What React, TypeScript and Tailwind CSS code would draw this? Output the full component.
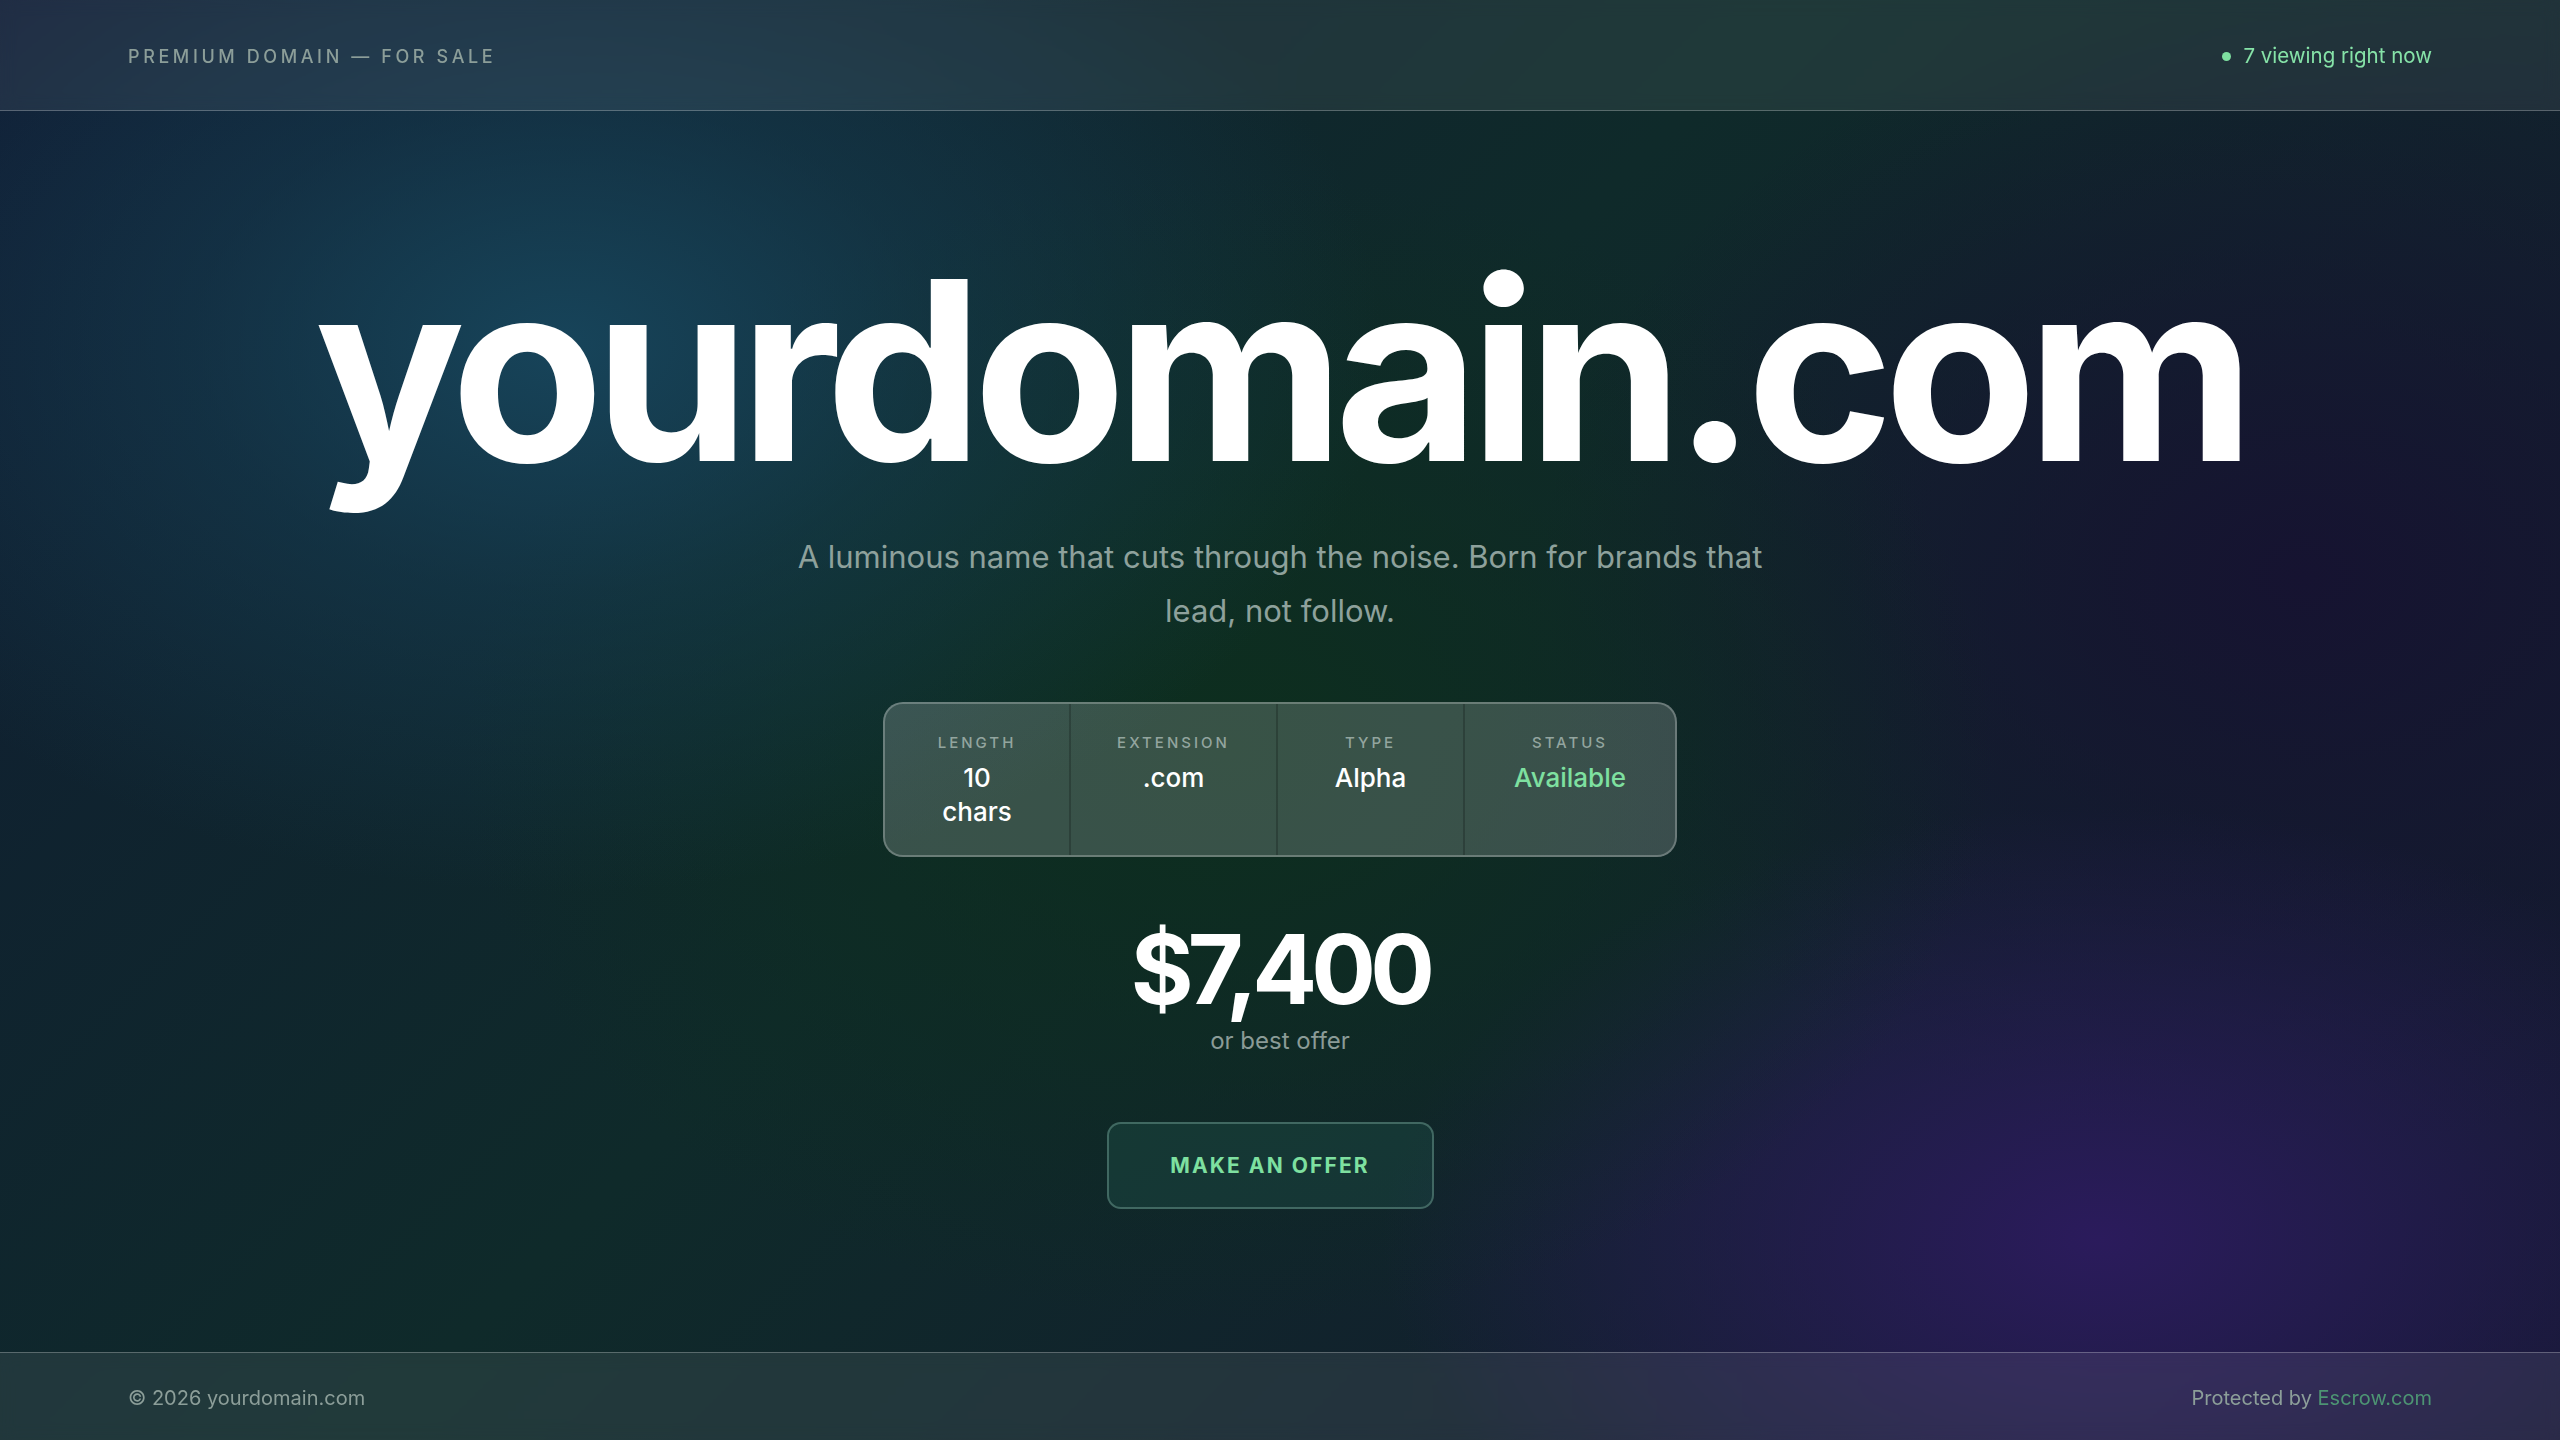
export default function App() {
    const stats = [
        { label: "Length", value: "10 chars", width: "w-[186px]", green: false },
        { label: "Extension", value: ".com", width: "w-[207px]", green: false },
        { label: "Type", value: "Alpha", width: "w-[187px]", green: false },
        { label: "Status", value: "Available", width: "w-[210px]", green: true },
    ]

    return (
        <div
            className="relative flex min-h-screen w-full flex-col overflow-hidden bg-[#0f1a2c] text-white bg-[radial-gradient(ellipse_32%_38%_at_22%_24%,#17445a_0%,rgba(23,68,90,0.45)_45%,transparent_100%),radial-gradient(ellipse_30%_40%_at_48%_52%,#0d2e1e_0%,rgba(13,46,30,0.5)_50%,transparent_100%),radial-gradient(ellipse_28%_30%_at_82%_86%,#2b1b5c_0%,rgba(43,27,92,0.5)_50%,transparent_100%),radial-gradient(ellipse_30%_40%_at_90%_40%,#161331_0%,transparent_100%),linear-gradient(135deg,#101c34_0%,#0f2a2a_45%,#141830_100%)]"
            style={{ fontFamily: "Inter, 'Noto Sans', sans-serif" }}
        >
            {/* Header */}
            <header className="flex h-[111px] items-center justify-between border-b border-white/25 bg-white/[0.07] px-[128px] backdrop-blur">
                <span className="pt-[2px] text-[18px] font-medium uppercase tracking-[0.2em] text-[#8c9e99]">
                    Premium Domain — For Sale
                </span>
                <span className="flex items-center gap-3 pt-[2px] text-[20.5px] text-[#86e3a8]">
                    <span className="h-[9px] w-[9px] rounded-full bg-[#7ee0a0]" />
                    7 viewing right now
                </span>
            </header>

            {/* Main */}
            <main className="flex flex-1 flex-col items-center justify-center pb-[9px]">
                <h1 className="text-[250px] font-bold leading-none tracking-[-0.04em] text-white">
                    yourdomain.com
                </h1>

                <p className="mt-[35px] max-w-[1010px] text-center text-[31px] leading-[54px] text-[#8ea19c]">
                    A luminous name that cuts through the noise. Born for brands that lead, not follow.
                </p>

                <div className="mt-[64px] flex rounded-[20px] border-2 border-white/25 bg-white/[0.18] divide-x-2 divide-black/20">
                    {stats.map((s) => (
                        <div key={s.label} className={`${s.width} flex flex-col items-center px-6 pt-[28px] pb-[26px] text-center`}>
                            <span className="text-[15px] font-medium uppercase tracking-[0.2em] text-[#93a59f]">
                                {s.label}
                            </span>
                            <span className={`mt-[7px] text-[26px] font-medium leading-[34px] ${s.green ? "text-[#7ee0a0]" : "max-w-[90px] text-white"}`}>
                                {s.value}
                            </span>
                        </div>
                    ))}
                </div>

                <div className="mt-[64px] text-[96px] font-bold leading-none tracking-[-0.06em] text-white">
                    $7,400
                </div>
                <div className="mt-[8px] text-[24px] leading-[32px] text-[#8a9b97]">or best offer</div>

                <button className="mt-[65px] mr-[20px] flex h-[87px] w-[327px] items-center justify-center rounded-[14px] border-2 border-[#5f8a80]/60 bg-[#2f7a6a]/20 text-[21px] font-bold uppercase tracking-[0.1em] text-[#7ee0a0]">
                    Make an Offer
                </button>
            </main>

            {/* Footer */}
            <footer className="flex h-[88px] items-center justify-between border-t border-white/25 bg-white/[0.08] px-[128px] text-[20px] text-[#8c9e99] backdrop-blur">
                <span className="pt-[2px]">© 2026 yourdomain.com</span>
                <span className="pt-[2px]">
                    Protected by <span className="text-[#4d9473]">Escrow.com</span>
                </span>
            </footer>
        </div>
    )
}
